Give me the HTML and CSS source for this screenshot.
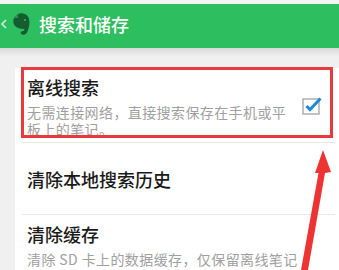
FILE: index.html
```html
<!DOCTYPE html>
<html lang="zh-CN">
<head>
<meta charset="utf-8">
<title>搜索和储存</title>
<link rel="stylesheet" href="styles.css">
</head>
<body>
<div class="topstrip"></div>
<header class="appbar">
  <svg class="back" width="6" height="10" viewBox="0 0 6 10"><polyline points="5,1 1,5 5,9" fill="none" stroke="currentColor" stroke-width="1.6"/></svg>
  <svg class="logo" width="20" height="24" viewBox="0 0 20 24">
    <path d="M3 6 L7 2 C11 0 17 2 18 7 C19 11 18 15 17 18 C16 22 13 24 10 22 C9 21 10 19 12 19 C13 19 14 18 13 17 C9 17 6 16 4 14 C2 12 2 8 3 6 Z" fill="#145d2e"/>
    <path d="M3 6 L7 2 L7 6 Z" fill="#2f8f4f"/>
    <circle cx="14" cy="8" r="1" fill="#2dbe60"/>
  </svg>
  <h1 class="title">搜索和储存</h1>
</header>
<div class="appbar-shadow"></div>
<main class="card">
  <div class="item item-first">
    <div class="text">
      <div class="item-title">离线搜索</div>
      <div class="item-desc">无需连接网络，直接搜索保存在手机或平板上的笔记。</div>
    </div>
    <svg class="check" width="20" height="20" viewBox="0 0 20 20">
      <rect x="1" y="3" width="16" height="15" fill="none" stroke="#a8a8a8" stroke-width="1.4"/>
      <path d="M4.5 10 L8 13.5 L18.5 2.5" fill="none" stroke="#1c8ad6" stroke-width="3"/>
    </svg>
  </div>
  <div class="item item-single">
    <div class="item-title">清除本地搜索历史</div>
  </div>
  <div class="item">
    <div class="text">
      <div class="item-title">清除缓存</div>
      <div class="item-desc">清除 SD 卡上的数据缓存，仅保留离线笔记本。</div>
    </div>
  </div>
</main>
<div class="annot-box"></div>
<svg class="annot-arrow" width="339" height="270" viewBox="0 0 339 270">
  <polygon points="323,150 315,173 318.5,173 301,270 308,270 325,173 331,172" fill="#ee3333"/>
</svg>
</body>
</html>
```
FILE: styles.css
```css
html, body {
  margin: 0;
  padding: 0;
}
body {
  width: 339px;
  height: 270px;
  overflow: hidden;
  background: #f0f0f0;
  font-family: "Noto Sans CJK SC", "Noto Sans", sans-serif;
  position: relative;
}
.topstrip {
  height: 4px;
  background: #f3f5f3;
}
.appbar {
  height: 44px;
  background: #2dbe60;
  display: flex;
  align-items: center;
  padding-bottom: 4px;
  box-sizing: border-box;
}
.back {
  color: rgba(255, 255, 255, 0.75);
  margin-left: 1px;
}
.logo {
  margin-left: 4px;
}
.title {
  margin: 0 0 0 8px;
  font-size: 18px;
  font-weight: 500;
  color: #ffffff;
  line-height: 24px;
}
.appbar-shadow {
  height: 8px;
  background: linear-gradient(#d9d9d9, #efefef);
}
.card {
  display: block;
  margin: 12px 0 0 15px;
  background: #ffffff;
  height: 202px;
  overflow: hidden;
}
.item {
  margin: 0 4px 0 7px;
  padding: 6px 0 4px 5px;
  border-top: 1px solid #e8e8e8;
  display: flex;
  align-items: center;
}
.item-first {
  border-top: none;
  height: 74px;
  box-sizing: border-box;
}
.item-single {
  padding-top: 23px;
  padding-bottom: 22px;
}
.text {
  flex: 1;
}
.item-title {
  font-size: 18px;
  font-weight: 500;
  line-height: 26px;
  color: #1a1a1a;
}
.item-desc {
  margin-top: 4px;
  font-size: 14px;
  letter-spacing: 0.4px;
  line-height: 17px;
  color: #a0a0a0;
  width: 272px;
}
.check {
  margin-right: 13px;
  flex: none;
}
.annot-box {
  position: absolute;
  left: 21px;
  top: 67px;
  width: 312px;
  height: 71px;
  border: 3px solid #e63a3c;
  box-sizing: border-box;
}
.annot-arrow {
  position: absolute;
  left: 0;
  top: 0;
}
```
